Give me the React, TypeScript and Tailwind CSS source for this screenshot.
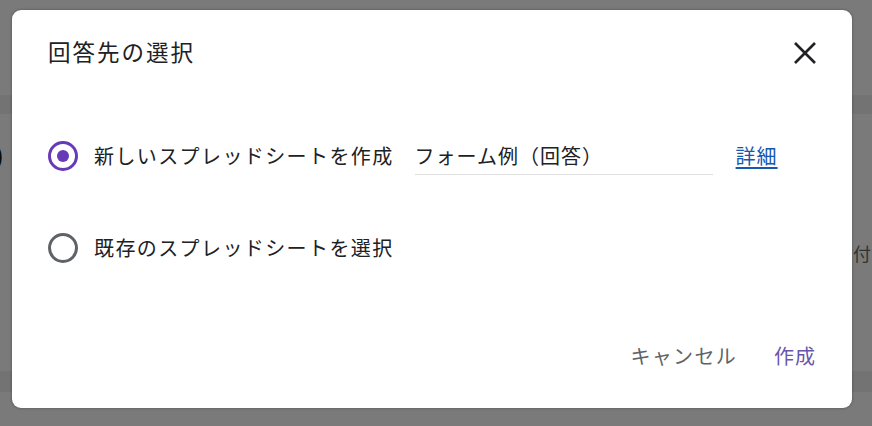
import { useState } from "react";

/* ======================
   CONSTANTS
====================== */
const FONT = "font-['Noto_Sans_CJK_JP','Noto_Sans',sans-serif]";

/* ======================
   PIECES
====================== */
function Radio({ checked }: { checked: boolean }) {
  return (
    <span
      className={[
        "flex h-[30px] w-[30px] shrink-0 items-center justify-center rounded-full border-[3px]",
        checked ? "border-[#673ab7]" : "border-[#5f6368]",
      ].join(" ")}
    >
      {checked && <span className="h-[12px] w-[12px] rounded-full bg-[#673ab7]" />}
    </span>
  );
}

function CloseIcon() {
  return (
    <svg width="24" height="24" viewBox="0 0 24 24" aria-hidden="true">
      <path d="M2 2 L22 22 M22 2 L2 22" stroke="#202124" strokeWidth="2.6" strokeLinecap="butt" />
    </svg>
  );
}

/* ======================
   COMPONENT
====================== */
export default function App() {
  const [mode, setMode] = useState<"new" | "existing">("new");

  return (
    <div className={`relative h-[426px] w-[872px] overflow-hidden bg-[#7a7a7a] ${FONT}`}>
      {/* ===== PAGE UNDER THE OVERLAY ===== */}
      <div className="absolute left-0 right-0 top-[95px] h-[19px] bg-[#737373]" />
      <div className="absolute left-0 right-0 top-[371px] h-[21px] bg-[#737373]" />
      <div className="absolute left-[-17px] top-[132px] text-[34px] font-bold leading-[48px] text-[#0a0a0a]">0</div>
      <div className="absolute left-[853px] top-[241px] text-[18px] leading-[24px] text-[#333]">付</div>

      {/* ===== DIALOG ===== */}
      <div className="relative pl-[12px] pt-[10px]">
        <div className="flex h-[398px] w-[840px] flex-col rounded-[9px] bg-white px-[36px] shadow-[0_0_3px_rgba(0,0,0,0.35)]">
          <header className="flex h-[86px] items-center justify-between">
            <h1 className="mt-[-2px] text-[22.5px] tracking-[2px] text-[#202124]">回答先の選択</h1>
            <button className="mr-[-4px] flex h-[30px] w-[30px] items-center justify-center">
              <CloseIcon />
            </button>
          </header>

          <label
            className="mt-[40px] flex h-[40px] items-center"
            onClick={() => setMode("new")}
          >
            <Radio checked={mode === "new"} />
            <span className="ml-[16px] text-[20px] tracking-[1.4px] text-[#202124]">
              新しいスプレッドシートを作成
            </span>
            <div className="ml-[21px] flex h-[38px] w-[298px] items-center border-b border-[#e0e0e0]">
              <span className="text-[20px] tracking-[1px] text-[#202124]">フォーム例（回答）</span>
            </div>
            <a className="ml-[23px] text-[20px] tracking-[1px] text-[#1558b0] underline underline-offset-[3px]">
              詳細
            </a>
          </label>

          <label
            className="mt-[52px] flex h-[40px] items-center"
            onClick={() => setMode("existing")}
          >
            <Radio checked={mode === "existing"} />
            <span className="ml-[16px] text-[20px] tracking-[1.4px] text-[#202124]">
              既存のスプレッドシートを選択
            </span>
          </label>

          <footer className="mt-[68px] flex h-[40px] items-center justify-end gap-[37px]">
            <button className="text-[20px] tracking-[1.3px] text-[#5f6368]">キャンセル</button>
            <button className="text-[20px] tracking-[1px] text-[#6a55ad]">作成</button>
          </footer>
        </div>
      </div>
    </div>
  );
}
